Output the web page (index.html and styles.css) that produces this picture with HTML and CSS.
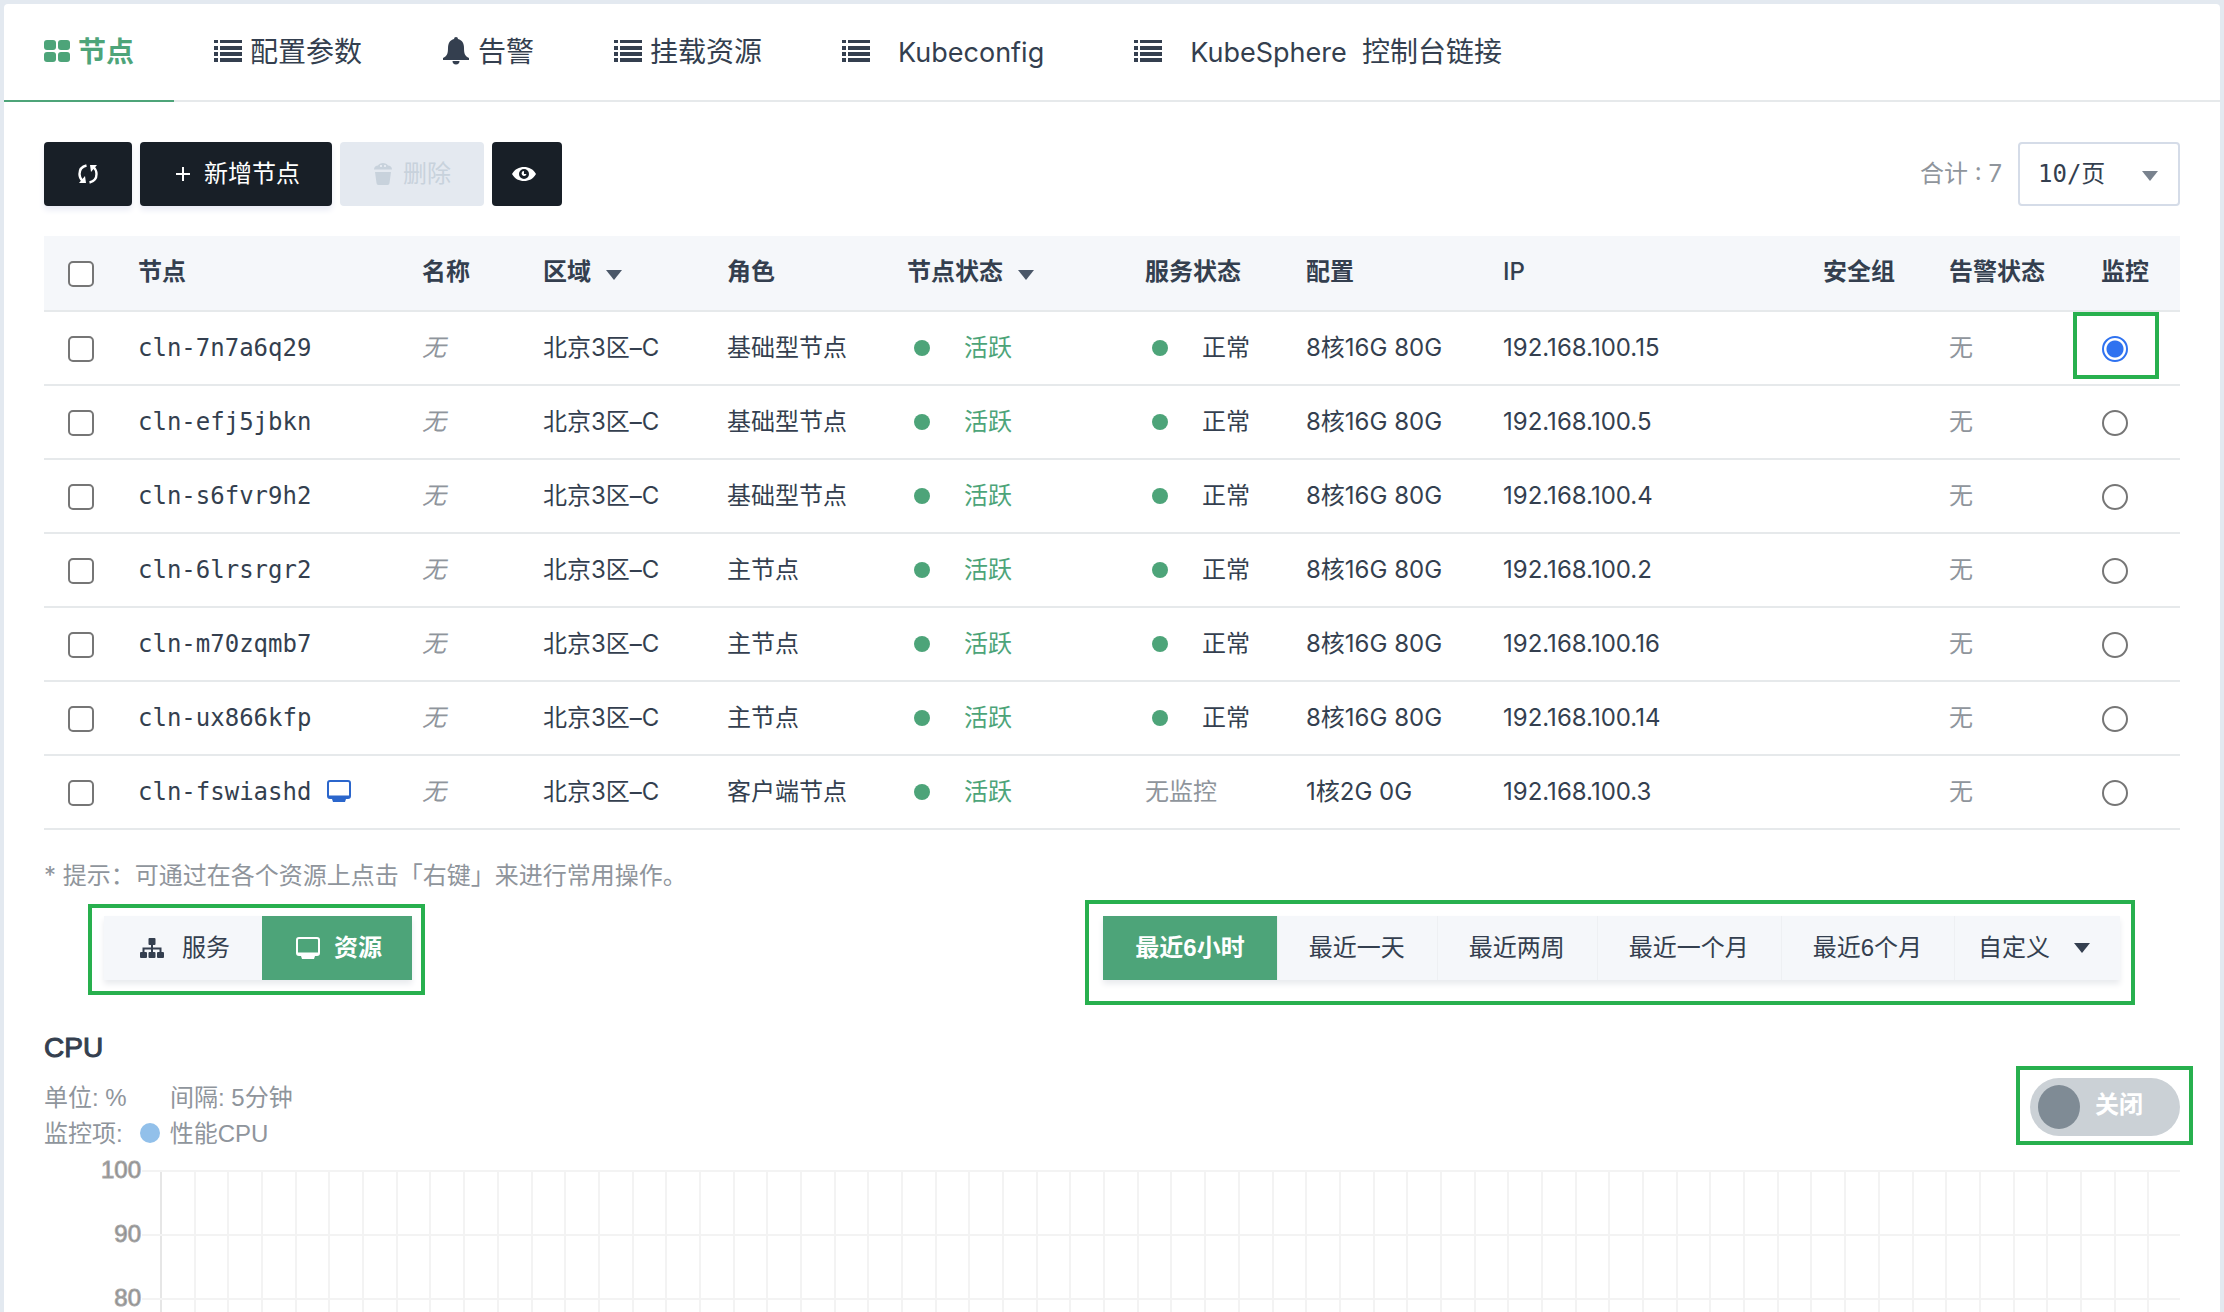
FILE: index.html
```
<!DOCTYPE html>
<html lang="zh-CN">
<head>
<meta charset="utf-8">
<title>节点</title>
<link rel="stylesheet" href="styles.css">
</head>
<body>
<svg class="defs" aria-hidden="true">
  <symbol id="i-list" viewBox="0 0 28 24"><path d="M0 1h4v3H0zM6 1h22v3H6zM0 7h4v4H0zM6 7h22v4H6zM0 13h4v4H0zM6 13h22v4H6zM0 19h4v4H0zM6 19h22v4H6z"/></symbol>
  <symbol id="i-grid" viewBox="0 0 26 24"><rect x="0" y="1" width="12" height="10" rx="3"/><rect x="14" y="1" width="12" height="10" rx="3"/><rect x="0" y="13" width="12" height="10" rx="3"/><rect x="14" y="13" width="12" height="10" rx="3"/></symbol>
  <symbol id="i-bell" viewBox="0 0 28 28"><path d="M12 2a2 2 0 0 1 4 0c4 1 6 4 6 9 0 6 1 8 5 10v2H1v-2c4-2 5-4 5-10 0-5 2-8 6-9zM10.500 24h7a3.500 3.500 0 0 1-7 0z"/></symbol>
  <symbol id="i-refresh" viewBox="0 0 20 20"><path d="M8.500 1.500C4 2.500 1.500 6 1.500 10c0 3 1 5 3 7M11.500 18.500C16 17.500 18.500 14 18.500 10c0-3-1-5-3-7" fill="none" stroke="currentColor" stroke-width="2.400"/><path d="M12 1h7l-6 7zM8 19H1l6-7z"/></symbol>
  <symbol id="i-trash" viewBox="0 0 20 24"><path fill-rule="evenodd" d="M1 7.500C1 5 3 3.500 5 3.500 6.500 0 13.500 0 15 3.500c2 0 4 1.500 4 4zM7 5h2V3H7zm4 0h2V3h-2zM2 10h16l-1.500 11a2 2 0 0 1-2 2h-9a2 2 0 0 1-2-2z"/></symbol>
  <symbol id="i-eye" viewBox="0 0 24 16"><path fill-rule="evenodd" d="M12 1c5 0 9 2 12 7-3 5-7 7-12 7S3 13 0 8c3-5 7-7 12-7zm0 2a5 5 0 1 0 0 10 5 5 0 0 0 0-10zm0 2v3h2.500A2.500 2.500 0 1 1 12 5z"/></symbol>
  <symbol id="i-tree" viewBox="0 0 24 22"><rect x="8.500" y="1" width="7" height="7" rx="1"/><rect x="0" y="15" width="7" height="6" rx="1"/><rect x="8.500" y="15" width="7" height="6" rx="1"/><rect x="17" y="15" width="7" height="6" rx="1"/><path d="M12 7v9M3.500 16v-4.500h17V16" fill="none" stroke="currentColor" stroke-width="2"/></symbol>
  <symbol id="i-screen" viewBox="0 0 24 22"><path fill-rule="evenodd" d="M3 0h18a3 3 0 0 1 3 3v13a3 3 0 0 1-3 3h-2l-1 3H6l-1-3H3a3 3 0 0 1-3-3V3a3 3 0 0 1 3-3zm0 2a1 1 0 0 0-1 1v12.500h20V3a1 1 0 0 0-1-1z"/></symbol>
  <symbol id="i-caret" viewBox="0 0 16 10"><path d="M0 0h16L8 10z"/></symbol>
</svg>
<main class="panel">
  <nav class="tabs">
    <a class="tab active" href="#nodes"><svg class="i-26"><use href="#i-grid"/></svg><span>节点</span></a>
    <a class="tab" href="#params"><svg class="i-28"><use href="#i-list"/></svg><span>配置参数</span></a>
    <a class="tab" href="#alarms"><svg class="i-bell"><use href="#i-bell"/></svg><span>告警</span></a>
    <a class="tab" href="#mounts"><svg class="i-28"><use href="#i-list"/></svg><span>挂载资源</span></a>
    <a class="tab spaced" href="#kubeconfig"><svg class="i-28"><use href="#i-list"/></svg><span class="latin">Kubeconfig</span></a>
    <a class="tab spaced" href="#kubesphere"><svg class="i-28"><use href="#i-list"/></svg><span><span class="latin">KubeSphere&nbsp;</span> 控制台链接</span></a>
  </nav>

  <div class="content">
    <div class="toolbar">
      <button class="btn refresh" aria-label="刷新"><svg class="i-20"><use href="#i-refresh"/></svg></button>
      <button class="btn add"><svg class="i-plus" viewBox="0 0 14 14"><path d="M7 0v14M0 7h14" stroke="currentColor" stroke-width="2"/></svg><span>新增节点</span></button>
      <button class="btn del" disabled><svg class="i-trash"><use href="#i-trash"/></svg><span>删除</span></button>
      <button class="btn view" aria-label="显示"><svg class="i-eye"><use href="#i-eye"/></svg></button>
      <label class="total" for="page-size">合计<span class="num"> : 7</span></label>
      <div class="select-wrap">
        <select id="page-size"><option>10/页</option></select>
        <svg class="i-caret"><use href="#i-caret"/></svg>
      </div>
    </div>

    <table class="nodes">
      <colgroup><col class="c1"><col class="c2"><col class="c3"><col class="c4"><col class="c5"><col class="c6"><col class="c7"><col class="c8"><col class="c9"><col class="c10"><col class="c11"><col class="c12"></colgroup>
      <thead>
        <tr><th><input type="checkbox" aria-label="全选"></th><th>节点</th><th>名称</th><th>区域<svg class="i-sort"><use href="#i-caret"/></svg></th><th>角色</th><th>节点状态<svg class="i-sort"><use href="#i-caret"/></svg></th><th>服务状态</th><th>配置</th><th class="num">IP</th><th>安全组</th><th>告警状态</th><th>监控</th></tr>
      </thead>
      <tbody>
        <tr><td><input type="checkbox" aria-label="cln-7n7a6q29"></td><td class="mono">cln-7n7a6q29</td><td class="none"><i>无</i></td><td>北京<span class="num">3</span>区<span class="num">–C</span></td><td>基础型节点</td><td class="ok"><b class="dot"></b>活跃</td><td><b class="dot"></b>正常</td><td><span class="num">8</span>核<span class="num">16G 80G</span></td><td class="num">192.168.100.15</td><td></td><td class="none">无</td><td><span class="mark mark-radio"><input type="radio" name="mon" aria-label="监控 cln-7n7a6q29" checked></span></td></tr>
        <tr><td><input type="checkbox" aria-label="cln-efj5jbkn"></td><td class="mono">cln-efj5jbkn</td><td class="none"><i>无</i></td><td>北京<span class="num">3</span>区<span class="num">–C</span></td><td>基础型节点</td><td class="ok"><b class="dot"></b>活跃</td><td><b class="dot"></b>正常</td><td><span class="num">8</span>核<span class="num">16G 80G</span></td><td class="num">192.168.100.5</td><td></td><td class="none">无</td><td><input type="radio" name="mon" aria-label="监控 cln-efj5jbkn"></td></tr>
        <tr><td><input type="checkbox" aria-label="cln-s6fvr9h2"></td><td class="mono">cln-s6fvr9h2</td><td class="none"><i>无</i></td><td>北京<span class="num">3</span>区<span class="num">–C</span></td><td>基础型节点</td><td class="ok"><b class="dot"></b>活跃</td><td><b class="dot"></b>正常</td><td><span class="num">8</span>核<span class="num">16G 80G</span></td><td class="num">192.168.100.4</td><td></td><td class="none">无</td><td><input type="radio" name="mon" aria-label="监控 cln-s6fvr9h2"></td></tr>
        <tr><td><input type="checkbox" aria-label="cln-6lrsrgr2"></td><td class="mono">cln-6lrsrgr2</td><td class="none"><i>无</i></td><td>北京<span class="num">3</span>区<span class="num">–C</span></td><td>主节点</td><td class="ok"><b class="dot"></b>活跃</td><td><b class="dot"></b>正常</td><td><span class="num">8</span>核<span class="num">16G 80G</span></td><td class="num">192.168.100.2</td><td></td><td class="none">无</td><td><input type="radio" name="mon" aria-label="监控 cln-6lrsrgr2"></td></tr>
        <tr><td><input type="checkbox" aria-label="cln-m70zqmb7"></td><td class="mono">cln-m70zqmb7</td><td class="none"><i>无</i></td><td>北京<span class="num">3</span>区<span class="num">–C</span></td><td>主节点</td><td class="ok"><b class="dot"></b>活跃</td><td><b class="dot"></b>正常</td><td><span class="num">8</span>核<span class="num">16G 80G</span></td><td class="num">192.168.100.16</td><td></td><td class="none">无</td><td><input type="radio" name="mon" aria-label="监控 cln-m70zqmb7"></td></tr>
        <tr><td><input type="checkbox" aria-label="cln-ux866kfp"></td><td class="mono">cln-ux866kfp</td><td class="none"><i>无</i></td><td>北京<span class="num">3</span>区<span class="num">–C</span></td><td>主节点</td><td class="ok"><b class="dot"></b>活跃</td><td><b class="dot"></b>正常</td><td><span class="num">8</span>核<span class="num">16G 80G</span></td><td class="num">192.168.100.14</td><td></td><td class="none">无</td><td><input type="radio" name="mon" aria-label="监控 cln-ux866kfp"></td></tr>
        <tr><td><input type="checkbox" aria-label="cln-fswiashd"></td><td class="mono">cln-fswiashd<svg class="i-client"><use href="#i-screen"/></svg></td><td class="none"><i>无</i></td><td>北京<span class="num">3</span>区<span class="num">–C</span></td><td>客户端节点</td><td class="ok"><b class="dot"></b>活跃</td><td class="none">无监控</td><td><span class="num">1</span>核<span class="num">2G 0G</span></td><td class="num">192.168.100.3</td><td></td><td class="none">无</td><td><input type="radio" name="mon" aria-label="监控 cln-fswiashd"></td></tr>
      </tbody>
    </table>

    <p class="hint"><span class="num">* </span>提示：可通过在各个资源上点击「右键」来进行常用操作。</p>

    <div class="filters">
      <div class="mark mark-kind"><div class="seg kind">
        <button><svg class="i-24"><use href="#i-tree"/></svg><span>服务</span></button>
        <button class="on"><svg class="i-24"><use href="#i-screen"/></svg><span>资源</span></button>
      </div></div>
      <div class="mark mark-range"><div class="seg range">
        <button class="on">最近6小时</button><button>最近一天</button><button>最近两周</button><button>最近一个月</button><button>最近6个月</button><button class="custom">自定义<svg class="i-caret"><use href="#i-caret"/></svg></button>
      </div></div>
    </div>

    <section class="chart-head">
      <div>
        <h2>CPU</h2>
        <p class="meta"><span class="unit">单位: %</span><span>间隔: 5分钟</span></p>
        <p class="meta"><span>监控项:</span><b class="legend"></b><span>性能CPU</span></p>
      </div>
      <div class="mark mark-switch"><button class="switch" role="switch" aria-checked="false"><b class="knob"></b><span>关闭</span></button></div>
    </section>

    <section class="chart">
      <div class="axis"><span>100</span><span>90</span><span>80</span></div>
      <div class="plot"><div></div><div></div><div></div></div>
    </section>
  </div>
</main>
</body>
</html>
```
FILE: styles.css
```
* { box-sizing: border-box; }
body {
  margin: 0;
  height: 100vh;
  padding: 4px 4px 0;
  overflow: hidden;
  background: #e3e9f0;
  color: #343f4f;
  font: 24px/36px "Liberation Sans", "Noto Sans CJK SC", sans-serif;
}
svg { fill: currentColor; flex: none; }
.defs { position: absolute; width: 0; height: 0; }
button, select, input { font: inherit; color: inherit; margin: 0; }
button { border: 0; padding: 0; background: none; }
p, h2 { margin: 0; }

.panel {
  display: flex;
  flex-direction: column;
  height: 100%;
  background: #fff;
  border-radius: 4px 4px 0 0;
}
.num { font-family: Inter, "Noto Sans CJK SC", sans-serif; }

.tabs { display: flex; height: 98px; border-bottom: 2px solid #e6e9eb; flex: none; }
.tab {
  display: flex;
  align-items: center;
  gap: 8px;
  height: 98px;
  padding: 2px 40px 2px;
  color: #343f4f;
  font-size: 28px;
  text-decoration: none;
}
.tab svg { margin-bottom: 4px; }
.tab.active { color: #4da479; font-weight: 700; border-bottom: 2px solid #4da479; padding-bottom: 0; }
.tab.spaced { gap: 28px; padding-right: 50px; }
.latin { font-family: Inter, sans-serif; font-size: 27px; }
.i-26 { width: 26px; height: 24px; }
.i-28 { width: 28px; height: 24px; }
.i-24 { width: 24px; height: 22px; }
.i-bell { width: 28px; height: 28px; }

.content { display: flex; flex-direction: column; flex: 1; min-height: 0; padding: 40px 40px 0; }

.toolbar { display: flex; align-items: center; gap: 8px; height: 64px; flex: none; }
.btn {
  display: flex;
  align-items: center;
  justify-content: center;
  height: 64px;
  border-radius: 4px;
  background: #181f27;
  color: #fff;
  box-shadow: 0 4px 6px #e9ebf5;
}
.refresh { width: 88px; }
.add { width: 192px; gap: 14px; padding-left: 4px; }
.del { width: 144px; gap: 10px; background: #e4e9f0; color: #c8d2dc; box-shadow: none; }
.view { width: 70px; padding-right: 6px; box-shadow: none; }
.i-20 { width: 20px; height: 20px; }
.i-plus { width: 14px; height: 14px; }
.i-trash { width: 20px; height: 24px; }
.i-eye { width: 24px; height: 16px; }
.total { margin-left: auto; margin-right: 8px; color: #8f959c; white-space: pre; }
.select-wrap { position: relative; width: 162px; }
.select-wrap select {
  appearance: none;
  width: 100%;
  height: 64px;
  padding: 0 18px;
  border: 2px solid #d5dce8;
  border-radius: 4px;
  background: #fff;
  font-family: "DejaVu Sans Mono", "Noto Sans CJK SC", monospace;
}
.i-caret { width: 16px; height: 10px; }
.select-wrap .i-caret { position: absolute; right: 22px; top: 29px; color: #79828e; pointer-events: none; }

.nodes { width: 100%; margin-top: 30px; table-layout: fixed; border-collapse: separate; border-spacing: 0; flex: none; }
.c1 { width: 71px; } .c2 { width: 284px; } .c3 { width: 121px; } .c4 { width: 184px; }
.c5 { width: 180px; } .c6 { width: 238px; } .c7 { width: 161px; } .c8 { width: 197px; }
.c9 { width: 320px; } .c10 { width: 126px; } .c11 { width: 152px; } .c12 { width: 102px; }
.nodes th, .nodes td {
  height: 74px;
  padding: 0 0 0 23px;
  border-bottom: 2px solid #e6e9eb;
  text-align: left;
  vertical-align: middle;
  white-space: nowrap;
}
.nodes th { height: 76px; padding-bottom: 2px; background: #f5f7fa; font-weight: 700; }
.nodes th.num { font-weight: 500; }
.nodes .mono { font-family: "DejaVu Sans Mono", monospace; }
.nodes .none { color: #8f959c; }
.nodes .ok { color: #4da479; }
.nodes input { appearance: none; display: block; width: 26px; height: 26px; margin: 2px 0 0 1px; border: 2px solid #767676; background: #fff; }
.nodes th input { margin-top: 4px; }
.nodes input[type=checkbox] { border-radius: 5px; }
.nodes input[type=radio] { border-radius: 50%; }
.nodes input:checked { border-color: #2f72f0; background: radial-gradient(circle, #2f72f0 0 8px, #fff 9px); }
.dot { display: inline-block; width: 16px; height: 16px; margin: 0 34px 0 7px; border-radius: 50%; background: #4da479; }
.i-sort { width: 16px; height: 10px; margin-left: 15px; color: #4a5768; }
.i-client { width: 24px; height: 22px; margin-left: 16px; color: #2b66cc; vertical-align: -2px; }

.hint { margin-top: 28px; color: #8f959c; }
.hint .num { white-space: pre; }

.mark { position: relative; }
.mark::after { content: ""; position: absolute; border: 4px solid #28b04e; pointer-events: none; }
.mark-radio { display: flow-root; width: 27px; }
.mark-radio::after { inset: -22px -31px -17px -28px; }
.mark-kind::after { inset: -12px -13px -15px -16px; }
.mark-range::after { inset: -16px -15px -25px -18px; }
.mark-switch::after { inset: -12px -13px -9px -14px; }

.filters { display: flex; justify-content: space-between; margin: 22px 60px 0; flex: none; }
.seg { display: flex; height: 64px; background: #f5f7fa; box-shadow: 0 4px 6px #e9ebee; }
.seg button { display: flex; align-items: center; justify-content: center; padding: 0 32px; white-space: nowrap; }
.seg button + button { box-shadow: inset 1px 0 #eef0f3; }
.seg .on, .seg button.on { background: #4da479; color: #fff; font-weight: 700; box-shadow: none; }
.kind button { gap: 18px; width: 158px; padding: 0 28px 0 32px; }
.kind button.on { gap: 14px; width: 150px; }
.range .custom { padding: 0 30px 0 24px; gap: 24px; }

.chart-head { display: flex; justify-content: space-between; align-items: flex-end; margin-top: 50px; flex: none; }
h2 { font-size: 28px; font-weight: 500; line-height: 36px; margin-bottom: 14px; -webkit-text-stroke: 1px currentColor; }
.meta { display: flex; align-items: center; color: #8f959c; }
.unit { width: 126px; }
.legend { width: 20px; height: 20px; margin: 0 10px 2px 17px; border-radius: 50%; background: #92c0ea; }
.mark-switch { margin-bottom: 16px; }
.switch { display: flex; align-items: center; gap: 15px; width: 150px; height: 58px; padding: 0 8px; border-radius: 29px; background: #cbd1d6; color: #fff; font-weight: 700; }
.switch span { padding-bottom: 4px; }
.knob { width: 42px; height: 44px; border-radius: 50%; background: #7f8b95; }

.chart { display: flex; flex: 1; min-height: 0; overflow: hidden; }
.axis { width: 97px; color: #8a8a8a; text-align: right; -webkit-text-stroke: 1px #a8a8a8; }
.axis span { display: block; height: 64px; }
.plot {
  flex: 1;
  margin: 18px 0 0 19px;
  border-left: 2px solid #e6e6e6;
  background: repeating-linear-gradient(to right, transparent 0 calc((100% + 3px) / 60 - 2px), #f3f3f3 calc((100% + 3px) / 60 - 2px) calc((100% + 3px) / 60));
}
.plot div { height: 64px; margin-left: -20px; border-top: 2px solid #f3f3f3; }
```
